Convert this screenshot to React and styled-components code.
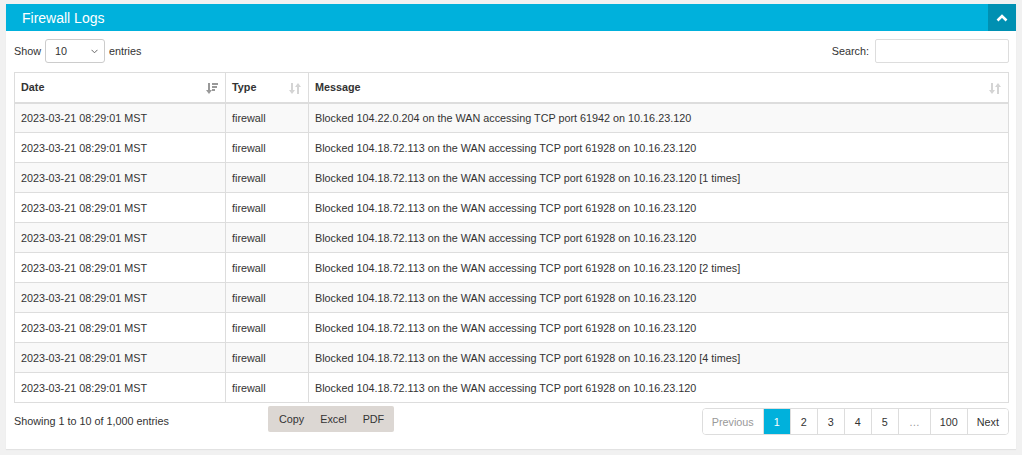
import React from "react";
import styled, { createGlobalStyle } from "styled-components";

const GlobalStyle = createGlobalStyle`
  html, body { margin: 0; padding: 0; background: #f1f1f1; }
  body { font-family: "Liberation Sans", Arial, sans-serif; font-size: 10.8px; color: #333; }
  * { box-sizing: border-box; }
`;

const Page = styled.div`
  padding: 4px 6px 6px 6px;
`;

const Panel = styled.section`
  width: 1010px;
  background: #fff;
  box-shadow: 0 1px 1px rgba(0,0,0,0.06);
`;

const Header = styled.header`
  display: flex;
  align-items: stretch;
  height: 27px;
  background: #00b1dc;
`;

const Title = styled.h2`
  flex: 1;
  margin: 0;
  padding-left: 16px;
  display: flex;
  align-items: center;
  font-size: 14px;
  font-weight: normal;
  color: #fff;
`;

const Collapse = styled.button`
  width: 28px;
  border: 0;
  padding: 0;
  background: #0090b2;
  display: flex;
  align-items: center;
  justify-content: center;
  cursor: pointer;
`;

const Body = styled.div`
  padding: 8px 7px 14px 8px;
`;

const Controls = styled.div`
  display: flex;
  justify-content: space-between;
  align-items: center;
  height: 24px;
  margin-bottom: 9px;
`;

const Label = styled.label`
  display: flex;
  align-items: center;
  gap: 4px;
  font-size: 10.8px;
  color: #333;
`;

const SelectBox = styled.div`
  position: relative;
  width: 60px;
  height: 24px;
  border: 1px solid #ccc;
  border-radius: 3px;
  display: flex;
  align-items: center;
  padding-left: 9px;
  font-size: 10.8px;
  color: #333;
  background: #fff;
`;

const Caret = styled.svg`
  position: absolute;
  right: 6px;
  top: 9px;
`;

const SearchInput = styled.input`
  width: 134px;
  height: 24px;
  border: 1px solid #ddd;
  border-radius: 2px;
  margin-left: 2px;
  outline: none;
`;

const Table = styled.table`
  width: 995px;
  border-collapse: collapse;
  border: 1px solid #ddd;
  table-layout: fixed;
`;

const Th = styled.th`
  position: relative;
  height: 30px;
  text-align: left;
  font-weight: bold;
  font-size: 10.8px;
  color: #333;
  padding: 0 6px;
  border: 1px solid #ddd;
  border-bottom: 2px solid #ddd;
`;

const SortIcon = styled.svg`
  position: absolute;
  right: 7px;
  top: 10px;
`;

const Tr = styled.tr`
  background: ${p => (p.$odd ? "#f9f9f9" : "#fff")};
`;

const Td = styled.td`
  height: 30px;
  padding: 0 6px;
  border: 1px solid #ddd;
  font-size: 10.8px;
  color: #333;
  white-space: nowrap;
`;

const Footer = styled.div`
  display: flex;
  align-items: flex-start;
  margin-top: 3px;
  height: 29px;
`;

const Info = styled.div`
  width: 254px;
  padding-top: 9px;
  font-size: 10.8px;
  color: #333;
`;

const ButtonGroup = styled.div`
  display: flex;
  background: #dcd7d3;
  height: 26px;
  border-radius: 2px;
  padding: 0 2px 0 3px;
`;

const ExportButton = styled.button`
  border: 0;
  background: transparent;
  font-family: inherit;
  font-size: 10.8px;
  color: #333;
  padding: 0 8px;
  cursor: pointer;
`;

const Pager = styled.ul`
  display: flex;
  list-style: none;
  margin: 2px 0 0 auto;
  padding: 0;
  height: 27px;
  border: 1px solid #ddd;
  border-radius: 4px;
  overflow: hidden;
`;

const PageItem = styled.li`
  display: flex;
  align-items: center;
  justify-content: center;
  min-width: ${p => p.$w || 27}px;
  padding: 0 9px;
  font-size: 10.8px;
  color: ${p => (p.$active ? "#fff" : p.$muted ? "#999" : "#333")};
  background: ${p => (p.$active ? "#00b1dc" : "#fff")};
  border-left: ${p => (p.$first ? "0" : "1px solid #ddd")};
`;

const dates = "2023-03-21 08:29:01 MST";
const rows = [
  "Blocked 104.22.0.204 on the WAN accessing TCP port 61942 on 10.16.23.120",
  "Blocked 104.18.72.113 on the WAN accessing TCP port 61928 on 10.16.23.120",
  "Blocked 104.18.72.113 on the WAN accessing TCP port 61928 on 10.16.23.120 [1 times]",
  "Blocked 104.18.72.113 on the WAN accessing TCP port 61928 on 10.16.23.120",
  "Blocked 104.18.72.113 on the WAN accessing TCP port 61928 on 10.16.23.120",
  "Blocked 104.18.72.113 on the WAN accessing TCP port 61928 on 10.16.23.120 [2 times]",
  "Blocked 104.18.72.113 on the WAN accessing TCP port 61928 on 10.16.23.120",
  "Blocked 104.18.72.113 on the WAN accessing TCP port 61928 on 10.16.23.120",
  "Blocked 104.18.72.113 on the WAN accessing TCP port 61928 on 10.16.23.120 [4 times]",
  "Blocked 104.18.72.113 on the WAN accessing TCP port 61928 on 10.16.23.120",
];

const SortBoth = () => (
  <SortIcon width="12" height="11" viewBox="0 0 12 11">
    <g fill="#d4d4d4">
      <rect x="2" y="0" width="2" height="8" />
      <polygon points="0,7 6,7 3,11" />
      <rect x="8" y="3" width="2" height="8" />
      <polygon points="6,4 12,4 9,0" />
    </g>
  </SortIcon>
);

const SortActive = () => (
  <SortIcon width="12" height="11" viewBox="0 0 12 11">
    <g fill="#999">
      <rect x="2" y="0" width="2" height="8" />
      <polygon points="0,7 6,7 3,11" />
      <rect x="6" y="0" width="6" height="2" />
      <rect x="6" y="3" width="5" height="2" />
      <rect x="6" y="6" width="3" height="2" />
    </g>
  </SortIcon>
);

export default function App() {
  return (
    <Page>
      <GlobalStyle />
      <Panel>
        <Header>
          <Title>Firewall Logs</Title>
          <Collapse aria-label="collapse">
            <svg width="12" height="8" viewBox="0 0 12 8">
              <path d="M1.5 6.5 L6 2 L10.5 6.5" stroke="#fff" strokeWidth="2.6" fill="none" />
            </svg>
          </Collapse>
        </Header>
        <Body>
          <Controls>
            <Label>
              Show
              <SelectBox>
                10
                <Caret width="7" height="5" viewBox="0 0 7 5">
                  <path d="M0.5 0.8 L3.5 3.8 L6.5 0.8" stroke="#666" strokeWidth="1" fill="none" />
                </Caret>
              </SelectBox>
              entries
            </Label>
            <Label>
              Search:
              <SearchInput />
            </Label>
          </Controls>
          <Table>
            <colgroup>
              <col style={{ width: "211px" }} />
              <col style={{ width: "83px" }} />
              <col />
            </colgroup>
            <thead>
              <tr>
                <Th>Date<SortActive /></Th>
                <Th>Type<SortBoth /></Th>
                <Th>Message<SortBoth /></Th>
              </tr>
            </thead>
            <tbody>
              {rows.map((m, i) => (
                <Tr key={i} $odd={i % 2 === 0}>
                  <Td>{dates}</Td>
                  <Td>firewall</Td>
                  <Td>{m}</Td>
                </Tr>
              ))}
            </tbody>
          </Table>
          <Footer>
            <Info>Showing 1 to 10 of 1,000 entries</Info>
            <ButtonGroup>
              <ExportButton>Copy</ExportButton>
              <ExportButton>Excel</ExportButton>
              <ExportButton>PDF</ExportButton>
            </ButtonGroup>
            <Pager>
              <PageItem $first $muted>Previous</PageItem>
              <PageItem $active>1</PageItem>
              <PageItem>2</PageItem>
              <PageItem>3</PageItem>
              <PageItem>4</PageItem>
              <PageItem>5</PageItem>
              <PageItem $muted $w={32}>…</PageItem>
              <PageItem>100</PageItem>
              <PageItem>Next</PageItem>
            </Pager>
          </Footer>
        </Body>
      </Panel>
    </Page>
  );
}
